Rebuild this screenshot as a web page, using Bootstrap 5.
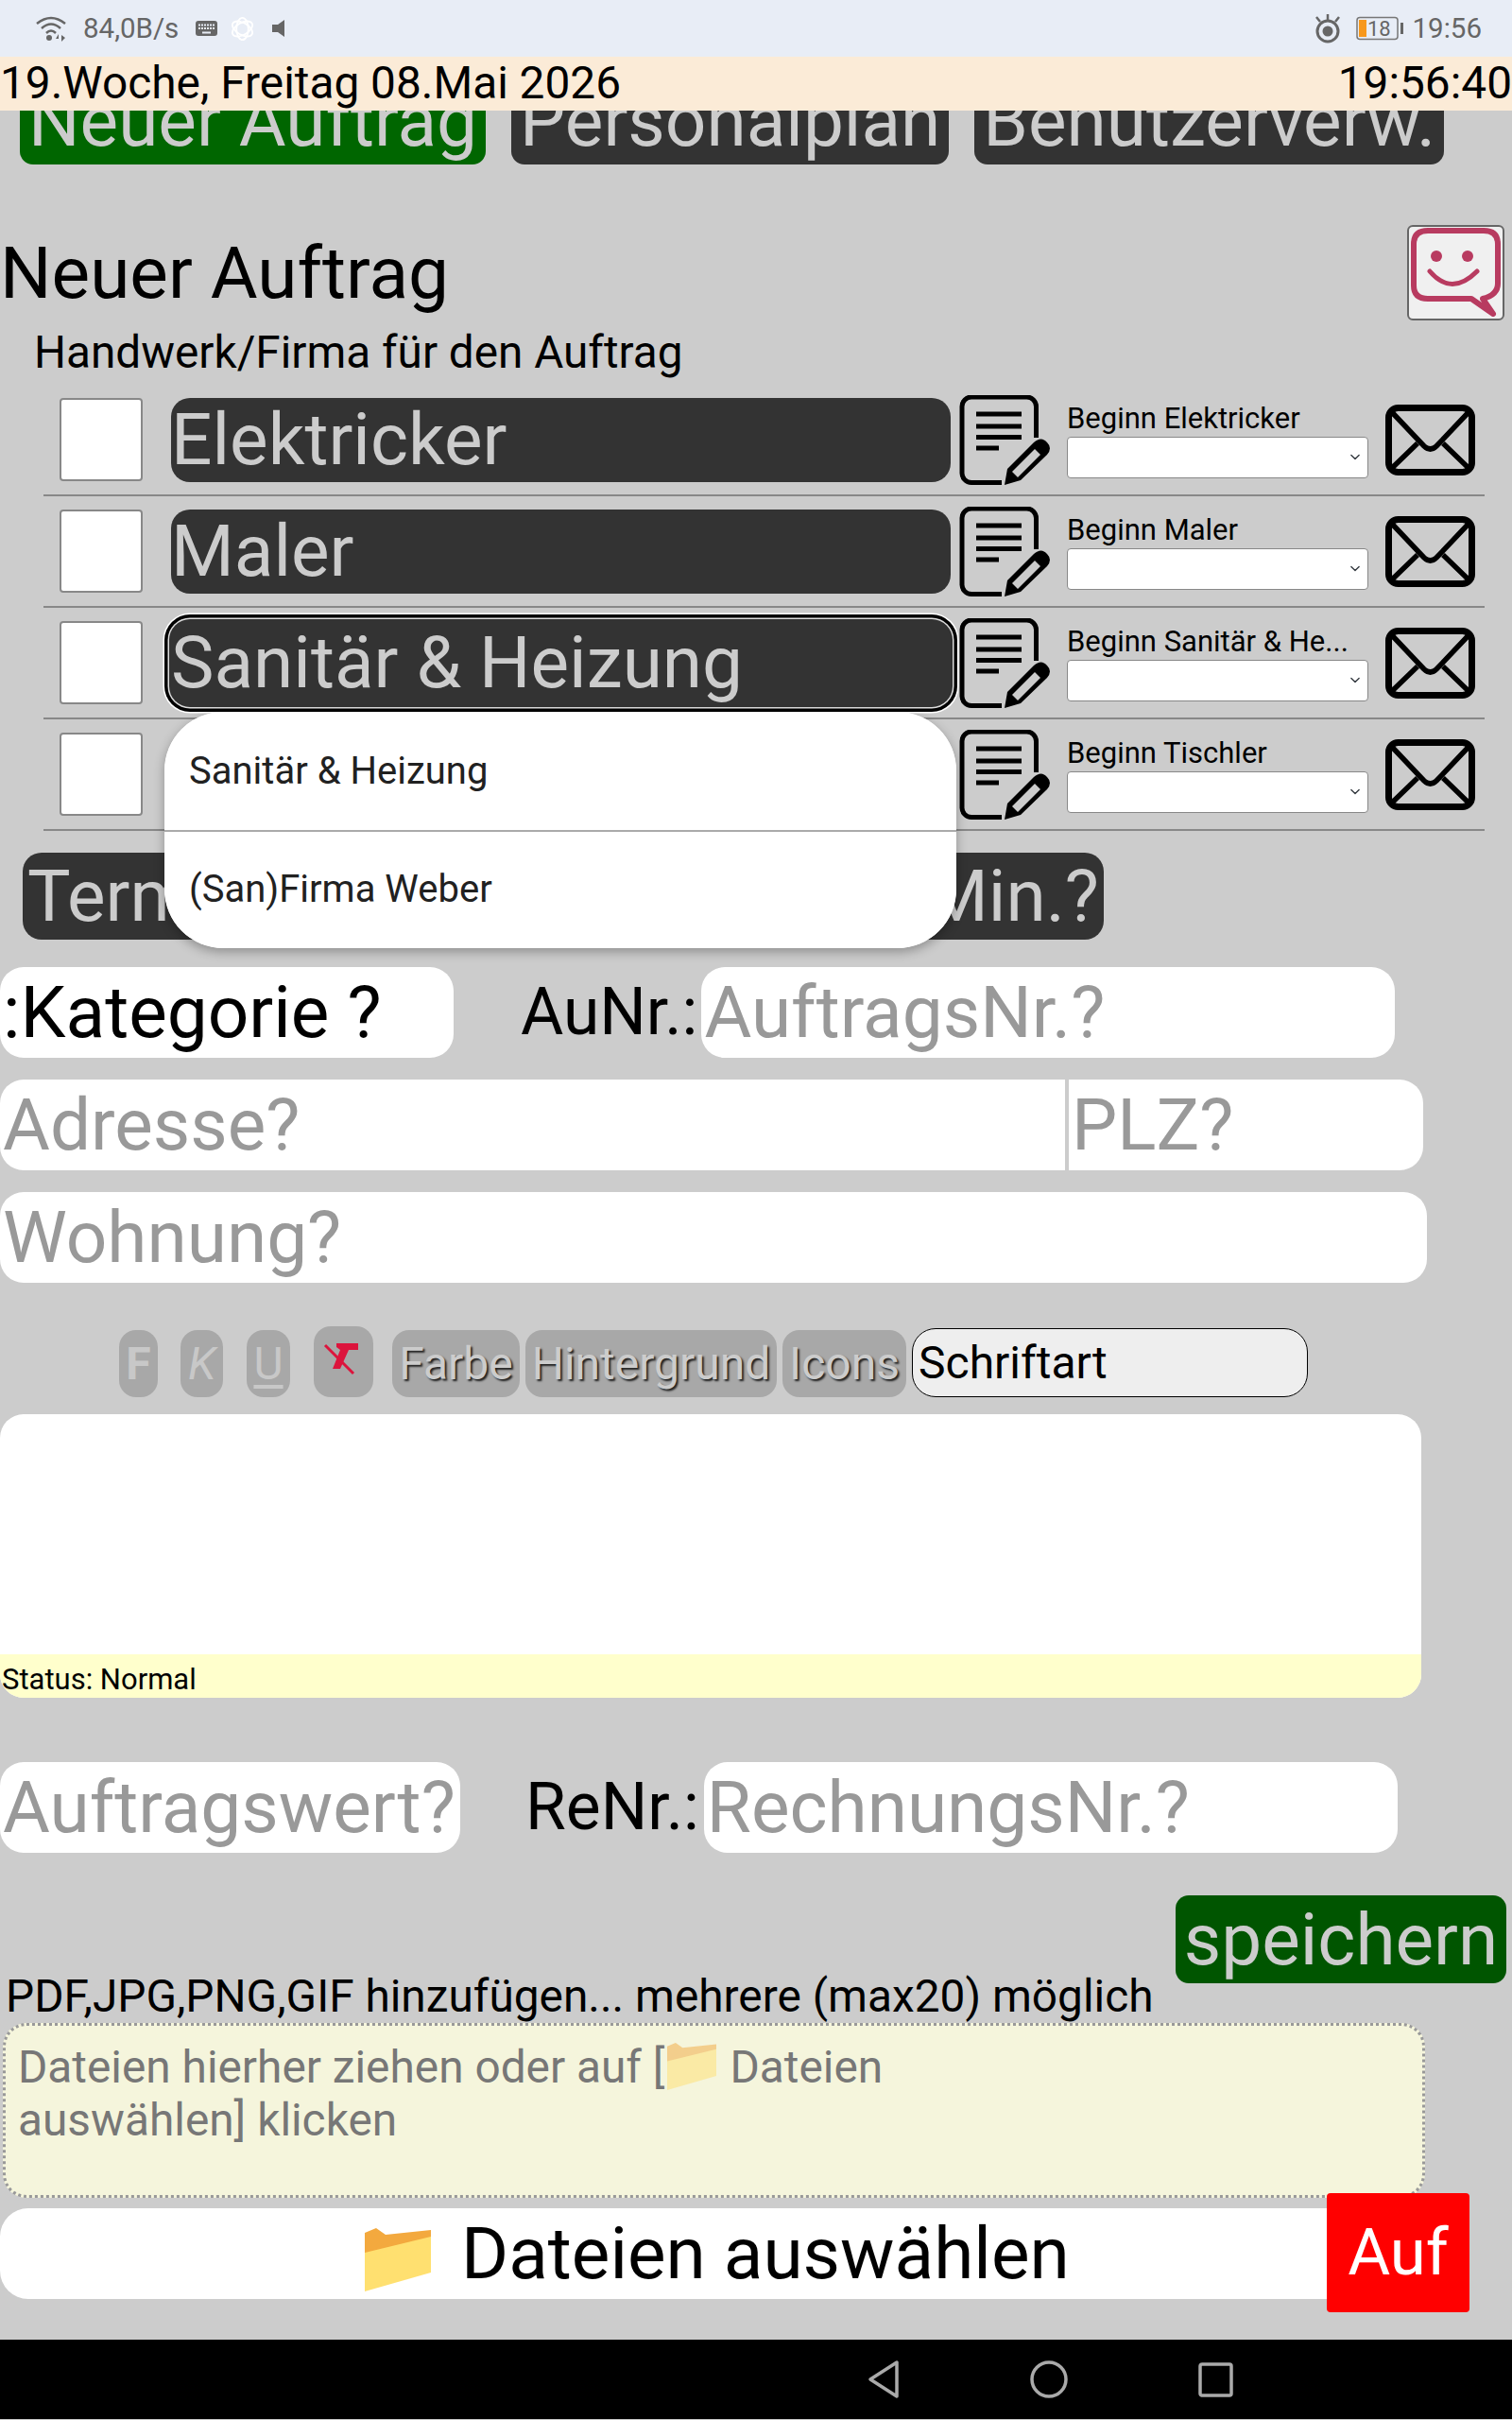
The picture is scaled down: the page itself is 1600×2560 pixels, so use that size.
<!DOCTYPE html>
<html lang="de">
	<head>
		<meta charset="UTF-8" />
		<meta name="viewport" content="width=device-width, initial-scale=1" />
		<title>Neuer Auftrag</title>
		<link
			href="https://cdn.jsdelivr.net/npm/bootstrap@5.3.0/dist/css/bootstrap.min.css"
			rel="stylesheet"
		/>
		<style>
			body {
				width: 1600px;
				height: 2560px;
				overflow: hidden;
				background: #ccc;
				color: #000;
				font-family: Roboto, sans-serif;
			}
			.sys-bar { height: 60px; background: #e8edf6; color: #666; font-size: 29.500px; padding: 0 32px 0 38px; }
			.sys-bar .sys-gap { margin-left: 18px; }
			.sys-bar .sys-gap-s { margin-left: 13px; }
			.sys-bar .sys-gap-m { margin-left: 14px; }
			.date-bar { height: 57px; background: #fbebd7; font-size: 47.800px; line-height: 57px; position: relative; z-index: 2; }

			.top-nav { margin: -35px 0 0 21px; gap: 27px; }
			.top-btn {
				height: 92px; padding: 0 9px; border: 0; border-radius: 14px;
				background: #333; color: #ccc; font-size: 76.500px; line-height: 92px; white-space: nowrap;
			}
			.top-btn.is-on { background: #060; }
			.title-row { height: 101px; margin-top: 64px; padding-right: 8px; }
			.page-title { font-size: 76.500px; line-height: 90px; margin: 0; font-weight: 400; }
			.smile-box { width: 103px; height: 101px; background: #f0f0f0; border: 2px solid #666; border-radius: 6px; }
			.sub-title { font-size: 47.700px; line-height: 50px; margin: 9px 0 9px 36px; }

			.trade-list { margin-left: 46px; width: 1525px; }
			.trade-row { height: 118px; border-bottom: 2px solid #888; padding-left: 17px; }
			.tick { width: 88px; height: 88px; background: #fff; border: 2px solid #888; border-radius: 4px; flex: none; }
			.trade-btn {
				width: 825px; height: 89px; margin-left: 30px; padding: 0; border: 0; border-radius: 20px; flex: none;
				background: #333; color: #ccc; font-size: 76.500px; line-height: 86px; text-align: left; white-space: nowrap;
			}
			.trade-btn.is-open { box-shadow: 0 0 0 2px #333, 0 0 0 3.500px #ddd, 0 0 0 7px #000, 0 0 0 8.500px #fff; }
			.note-ico { width: 96px; height: 95px; margin-left: 9px; flex: none; }
			.begin-col { width: 319px; margin-left: 18px; flex: none; }
			.begin-col label { display: block; font-size: 31px; line-height: 36px; margin-bottom: 1px; white-space: nowrap; }
			.begin-col .form-select {
				height: 44px; padding: 0 24px 0 4px; border: 1px solid #888; border-radius: 4px;
				background-position: right 6px center; background-size: 14px 11px;
			}
			.mail-ico { width: 95px; height: 75px; margin-left: 18px; flex: none; }

			.pick-wrap { position: relative; }
			.pick-menu {
				position: absolute; left: 174px; top: -149px; width: 838px; height: 250px; z-index: 3;
				border-radius: 62px; background: #fff; overflow: hidden; box-shadow: 0 4px 12px rgba(0, 0, 0, .3);
			}
			.pick-menu .list-group-item {
				height: 125px; padding: 0 26px; border: 0; background: #fff; color: #212121;
				font-size: 40px; line-height: 125px;
			}
			.pick-menu .list-group-item + .list-group-item { border-top: 2px solid #aaa; line-height: 121px; }
			.date-row { margin: 23px 0 0 24px; }
			.date-btn { height: 92px; border: 0; padding: 0 5px; background: #333; color: #ccc; border-radius: 20px; font-size: 76.500px; line-height: 90px; white-space: nowrap; }
			.date-btn.date-a { width: 300px; text-align: left; }
			.date-btn.date-b { width: 844px; text-align: right; }

			.field-row { margin-top: 23px; }
			.field-row.row-first { margin-top: 29px; }
			.field-row.row-value { margin-top: 68px; }
			.big-field.form-control, .big-pick.form-select {
				height: 96px; padding: 0 3px; border: 0; border-radius: 25px; background: #fff;
				color: #000; font-size: 76.500px; line-height: 96px;
			}
			.big-field.form-control::placeholder { color: #999; opacity: 1; }
			.big-pick.form-select { width: 480px; background-image: none; }
			.field-label { font-size: 69.500px; line-height: 96px; white-space: nowrap; }
			.label-au { margin: 0 4px 0 71px; }
			.label-re { margin: 0 5px 0 69px; }
			.w-nr { width: 734px !important; }
			.w-value { width: 487px !important; }
			.w-addr { width: 1127px !important; border-radius: 25px 0 0 25px !important; }
			.w-plz { width: 375px !important; margin-left: 4px; border-radius: 0 25px 25px 0 !important; }
			.w-flat { width: 1510px !important; }

			.edit-tools { height: 76px; margin: 45px 0 0 126px; }
			.tool-btn {
				height: 71px; padding: 0; border: 0; border-radius: 18px; background: #a8a8a8; color: #ccc;
				font-size: 48px; line-height: 68px; text-shadow: 2px 2px 2px #222; white-space: nowrap; flex: none;
			}
			.tool-abc { font-size: 48px; color: #c8c8c8; text-shadow: none; margin-right: 25px; }
			.tool-f { width: 41px; margin-right: 24px; }
			.tool-k { width: 45px; }
			.tool-u { width: 46px; text-decoration-thickness: 5px; text-underline-offset: 6px; }
			.tool-clear { width: 63px; height: 75px; margin-right: 20px; }
			.tool-farbe { width: 135px; margin-right: 6px; }
			.tool-hg { width: 266px; margin-right: 6px; }
			.tool-icons { width: 131px; margin-right: 6px; }
			.font-pick {
				width: 419px; height: 73px; padding: 0 6px; border: 1px solid #000; border-radius: 25px;
				background: #eee; font-size: 48px; line-height: 70px; flex: none;
			}
			.edit-box { width: 1504px; height: 300px; margin-top: 18px; background: #fff; border-radius: 25px; overflow: hidden; }
			.edit-status { height: 46px; background: #ffc; font-size: 31px; line-height: 54px; padding-left: 2px; }

			.save-row { height: 134px; margin-top: 45px; padding: 0 6px; }
			.file-hint { font-size: 47.800px; line-height: 54px; white-space: nowrap; }
			.save-btn { width: 350px; height: 93px; padding: 0; border: 0; border-radius: 14px; background: #050; color: #ccc; font-size: 76.500px; line-height: 88px; }
			.drop-box {
				width: 1505px; height: 185px; margin: 1px 0 0 3px; padding: 16px 13px; border: 3px dotted #999; border-radius: 25px;
				background: #f5f5dc; color: #777; font-size: 47.800px; line-height: 56px;
			}
			.drop-box svg { width: 52px; height: 50px; margin: 0 15px 0 2px; vertical-align: -8px; opacity: .5; }
			.file-wrap { position: relative; margin-top: 11px; height: 96px; }
			.file-btn {
				width: 1420px; height: 96px; padding: 0 0 0 386px; border: 0; border-radius: 30px 0 0 30px; background: #fff;
				color: #000; font-size: 76.500px; line-height: 92px; text-align: left;
			}
			.file-btn svg { width: 70px; height: 67px; margin-right: 32px; vertical-align: -14px; }
			.auf-btn {
				position: absolute; left: 1404px; top: -16px; width: 151px; height: 126px; padding: 0; border: 0; border-radius: 4px;
				background: #f00; color: #fff; font-size: 69px;
			}
			.soft-keys { height: 84px; margin-top: 43px; background: #000; padding-left: 918px; gap: 138px; }
		</style>
	</head>
	<body>
		<svg width="0" height="0" class="position-absolute">
			<symbol id="ico-note" viewBox="0 0 96 95">
				<path d="M81.500 45V12a10 10 0 0 0-10-10H13a10 10 0 0 0-10 10v70a10 10 0 0 0 10 10.500h32" fill="none" stroke="#000" stroke-width="5" />
				<path d="M18 20h48M18 33h48M18 44.500h48M18 56h24" stroke="#000" stroke-width="5" />
				<path d="M48 95 51 78 79 50Q87 43 93 50 99 56 93 63L65 90Z" fill="#000" />
				<path d="M56 81 80 57 86 63 62 87Z" fill="#ccc" />
			</symbol>
			<symbol id="ico-mail" viewBox="0 0 95 75">
				<rect x="3.500" y="3.500" width="88" height="68" rx="10" fill="none" stroke="#000" stroke-width="7" />
				<path d="M5 6 41 44q6.500 6 13 0L90 6M5 69 34 41M90 69 61 41" fill="none" stroke="#000" stroke-width="5.500" />
			</symbol>
			<symbol id="ico-folder" viewBox="0 0 70 67">
				<path d="M0 5 12 0 22 7 70 2V12L0 30Z" fill="#f3a93e" />
				<path d="M0 67V26L70 9V47Z" fill="#ffe070" />
			</symbol>
		</svg>

		<div class="sys-bar d-flex align-items-center">
			<svg width="32" height="28" viewBox="0 0 32 28" fill="none" stroke="#666" stroke-width="2.500">
				<path d="M1 9Q16-3 31 9M6 14Q16 5 26 14M11 19Q16 14 21 19" />
				<circle cx="14" cy="24" r="3" fill="#666" stroke="none" />
				<path d="M24 20 21 25H24ZM27 21V28L31 24Z" fill="#666" stroke="none" />
			</svg>
			<span class="sys-gap">84,0B/s</span>
			<svg class="sys-gap" width="23" height="16" viewBox="0 0 23 16">
				<rect width="23" height="16" rx="3" fill="#666" />
				<path d="M3 4.500h17M3 8h17" stroke="#e8edf6" stroke-width="2" stroke-dasharray="2 1" />
				<path d="M7 12.500h9" stroke="#e8edf6" stroke-width="2" />
			</svg>
			<svg class="sys-gap-s" width="27" height="27" viewBox="0 0 30 30" fill="none" stroke="#fff" stroke-width="2">
				<ellipse cx="15" cy="15" rx="7" ry="13" />
				<ellipse cx="15" cy="15" rx="7" ry="13" transform="rotate(60 15 15)" />
				<ellipse cx="15" cy="15" rx="7" ry="13" transform="rotate(120 15 15)" />
			</svg>
			<svg class="sys-gap" width="13" height="18" viewBox="0 0 13 18">
				<path d="M13 0V18L6 13H0V5H6Z" fill="#666" />
			</svg>
			<div class="ms-auto d-flex align-items-center">
				<svg width="32" height="32" viewBox="0 0 32 32" fill="none" stroke="#666">
					<circle cx="16" cy="19" r="11" stroke-width="3" />
					<circle cx="16" cy="19" r="5.500" fill="#666" stroke="none" />
					<path d="M16 7V1M8 9 4 4M24 9 28 4" stroke-width="2.500" />
				</svg>
				<svg class="sys-gap-m" width="52" height="26" viewBox="0 0 52 26">
					<rect x="1" y="1.500" width="43" height="23" rx="3" fill="none" stroke="#777" stroke-width="1.500" />
					<rect x="3" y="4" width="8" height="18" fill="#f7981c" />
					<rect x="47" y="7" width="3" height="12" fill="#666" />
					<text x="12" y="21" font-family="Roboto, sans-serif" font-size="22" fill="#666">18</text>
				</svg>
				<span class="ms-2">19:56</span>
			</div>
		</div>
		<div class="date-bar d-flex justify-content-between">
			<span>19.Woche, Freitag 08.Mai 2026</span>
			<span>19:56:40</span>
		</div>

		<nav class="top-nav d-flex">
			<button class="top-btn is-on">Neuer Auftrag</button>
			<button class="top-btn">Personalplan</button>
			<button class="top-btn">Benutzerverw.</button>
		</nav>

		<div class="title-row d-flex justify-content-between align-items-center">
			<h1 class="page-title">Neuer Auftrag</h1>
			<div class="smile-box">
				<svg width="99" height="97" viewBox="0 0 99 97" fill="none" stroke="#b83b60">
					<path d="M66 76H20Q5 76 5 62V18Q5 4 20 4H79Q94 4 94 18V60Q94 72 78 76L89 92 66 76Z" stroke-width="6" stroke-linejoin="round" />
					<circle cx="29" cy="31" r="6" fill="#b83b60" stroke="none" />
					<circle cx="62" cy="31" r="6" fill="#b83b60" stroke="none" />
					<path d="M22 47Q45 74 72 47" stroke-width="5" stroke-linecap="round" />
				</svg>
			</div>
		</div>
		<div class="sub-title">Handwerk/Firma für den Auftrag</div>

		<div class="trade-list" id="trade-list"></div>

		<div class="pick-wrap">
			<ul class="pick-menu list-group">
				<li class="list-group-item">Sanitär &amp; Heizung</li>
				<li class="list-group-item">(San)Firma Weber</li>
			</ul>
			<div class="date-row d-flex">
				<button class="date-btn date-a">Termin?</button>
				<button class="date-btn date-b">Std.? Min.?</button>
			</div>
		</div>

		<div class="field-row row-first d-flex">
			<select class="big-pick form-select"><option>:Kategorie ?</option></select>
			<span class="field-label label-au">AuNr.:</span>
			<input class="big-field form-control w-nr" placeholder="AuftragsNr.?" />
		</div>
		<div class="field-row d-flex">
			<input class="big-field form-control w-addr" placeholder="Adresse?" />
			<input class="big-field form-control w-plz" placeholder="PLZ?" />
		</div>
		<div class="field-row d-flex">
			<input class="big-field form-control w-flat" placeholder="Wohnung?" />
		</div>

		<div class="edit-tools d-flex align-items-end">
			<button class="tool-btn tool-abc tool-f fw-bold">F</button>
			<button class="tool-btn tool-abc tool-k fst-italic">K</button>
			<button class="tool-btn tool-abc tool-u text-decoration-underline">U</button>
			<button class="tool-btn tool-clear">
				<svg class="d-block" width="63" height="75" viewBox="0 0 63 75" fill="#dc143c">
					<path d="M24 18H47V25H37L28 45H20L28 25 24 22Z" />
					<path d="M12 20 42 50" stroke="#dc143c" stroke-width="3" />
				</svg>
			</button>
			<button class="tool-btn tool-farbe">Farbe</button>
			<button class="tool-btn tool-hg">Hintergrund</button>
			<button class="tool-btn tool-icons">Icons</button>
			<button class="font-pick text-start">Schriftart</button>
		</div>

		<div class="edit-box d-flex flex-column">
			<div class="flex-grow-1"></div>
			<div class="edit-status">Status: Normal</div>
		</div>

		<div class="field-row row-value d-flex">
			<input class="big-field form-control w-value" placeholder="Auftragswert?" />
			<span class="field-label label-re">ReNr.:</span>
			<input class="big-field form-control w-nr" placeholder="RechnungsNr.?" />
		</div>

		<div class="save-row d-flex justify-content-between">
			<div class="file-hint align-self-end">PDF,JPG,PNG,GIF hinzufügen... mehrere (max20) möglich</div>
			<button class="save-btn align-self-start">speichern</button>
		</div>

		<div class="drop-box">
			Dateien hierher ziehen oder auf [<svg><use href="#ico-folder" /></svg>Dateien<br />auswählen] klicken
		</div>

		<div class="file-wrap">
			<button class="file-btn"><svg><use href="#ico-folder" /></svg>Dateien auswählen</button>
			<button class="auf-btn">Auf</button>
		</div>

		<div class="soft-keys d-flex align-items-center">
			<svg width="34" height="42" viewBox="0 0 34 42" fill="none" stroke="#aaa" stroke-width="3.500" stroke-linejoin="round">
				<path d="M31 3V39L3 21Z" />
			</svg>
			<svg width="40" height="40" viewBox="0 0 40 40" fill="none" stroke="#aaa" stroke-width="3.500">
				<circle cx="20" cy="20" r="18" />
			</svg>
			<svg width="37" height="37" viewBox="0 0 37 37" fill="none" stroke="#aaa" stroke-width="3.500">
				<rect x="2" y="2" width="33" height="33" rx="2" />
			</svg>
		</div>

		<script>
			const trades = [
				["Elektricker", "Beginn Elektricker"],
				["Maler", "Beginn Maler"],
				["Sanitär & Heizung", "Beginn Sanitär & He..."],
				["Tischler", "Beginn Tischler"],
			];

			let rowsHTML = "";
			trades.forEach(function (t, i) {
				rowsHTML += `<div class="trade-row d-flex align-items-center">
					<div class="tick"></div>
					<button class="trade-btn ${i == 2 ? "is-open" : ""}">${t[0].replace("&", "&amp;")}</button>
					<svg class="note-ico"><use href="#ico-note" /></svg>
					<div class="begin-col">
						<label>${t[1].replace("&", "&amp;")}</label>
						<select class="form-select"></select>
					</div>
					<svg class="mail-ico"><use href="#ico-mail" /></svg>
				</div>`;
			});
			document.getElementById("trade-list").innerHTML = rowsHTML;
		</script>
		<script src="https://cdn.jsdelivr.net/npm/bootstrap@5.3.0/dist/js/bootstrap.bundle.min.js"></script>
	</body>
</html>
